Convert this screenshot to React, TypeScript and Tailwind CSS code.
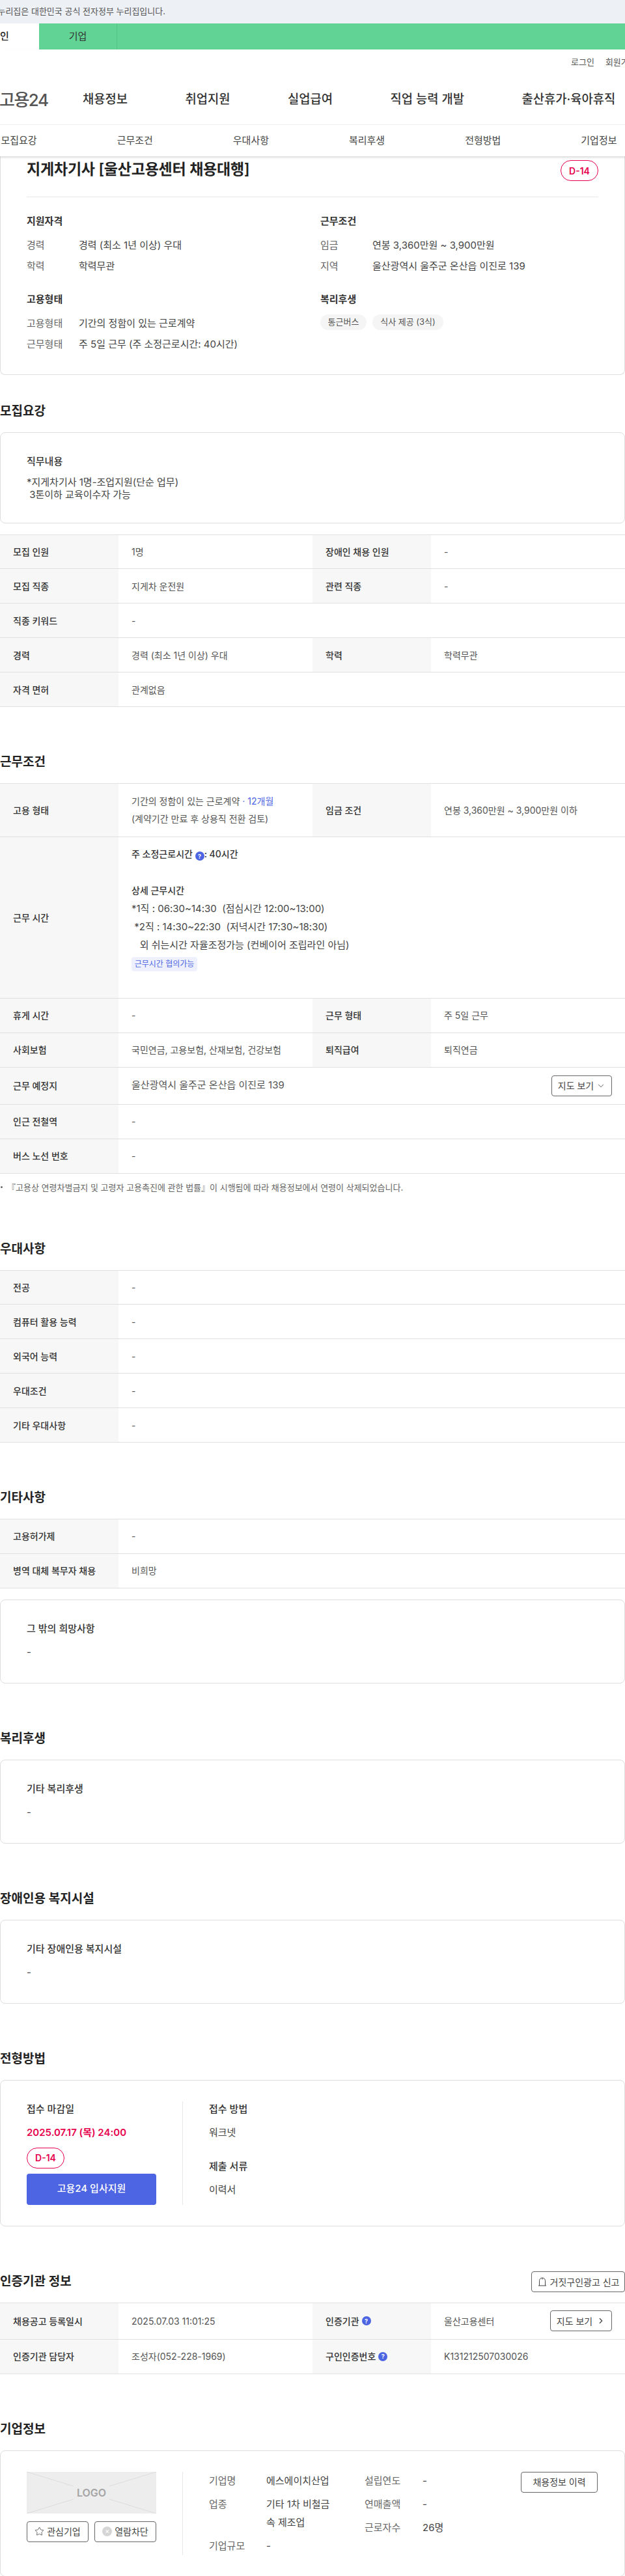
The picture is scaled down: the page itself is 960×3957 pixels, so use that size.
import { ChevronDown, ChevronRight, Star } from 'lucide-react'
import type { ReactNode } from 'react'

function Help() {
  return (
    <span className="inline-flex h-[14px] w-[14px] items-center justify-center rounded-full bg-[#4d65e3] align-[-2px] text-[9px] font-bold leading-none text-white">
      ?
    </span>
  )
}

function DBadge() {
  return (
    <span className="flex h-8 w-[58px] items-center justify-center rounded-full border border-[#e6004d] text-[14px] font-semibold text-[#e6004d]">
      D-14
    </span>
  )
}

function Section({ title, action, children }: { title: string; action?: ReactNode; children: ReactNode }) {
  return (
    <section className="mt-[71.5px]">
      <div className="mb-[17.5px] flex h-7 items-center justify-between">
        <h2 className="text-[19px] font-semibold leading-7 text-[#222]">{title}</h2>
        {action}
      </div>
      {children}
    </section>
  )
}

function Box({ title, children, className }: { title: string; children: ReactNode; className?: string }) {
  return (
    <div className={`rounded-lg border border-[#ddd] px-10 pt-[32px] ${className ?? 'pb-[35px]'}`}>
      <h3 className="text-[15px] font-medium leading-6 text-[#333]">{title}</h3>
      <div className="mt-3 text-[15px] leading-6 text-[#444]">{children}</div>
    </div>
  )
}

function Label({ children }: { children: ReactNode }) {
  return (
    <div className="flex items-center bg-[#f7f7f7] pl-5 text-[14px] font-medium text-[#333]">{children}</div>
  )
}

function Value({ children, wide }: { children: ReactNode; wide?: boolean }) {
  return (
    <div className={`flex items-center pl-5 text-[14px] text-[#555] ${wide ? 'col-span-3' : ''}`}>{children}</div>
  )
}

function Row({ children, h = 'h-[52.9px]' }: { children: ReactNode; h?: string }) {
  return <div className={`grid grid-cols-[182px_298px_182px_298px] border-b border-[#e0e0e0] ${h}`}>{children}</div>
}

function Pair({ a, b, c, d }: { a: string; b: string; c: string; d: string }) {
  return (
    <Row>
      <Label>{a}</Label>
      <Value>{b}</Value>
      <Label>{c}</Label>
      <Value>{d}</Value>
    </Row>
  )
}

function Single({ a, b }: { a: string; b: string }) {
  return (
    <Row>
      <Label>{a}</Label>
      <Value wide>{b}</Value>
    </Row>
  )
}

function Table({ children }: { children: ReactNode }) {
  return <div className="border-t border-[#e0e0e0]">{children}</div>
}

function Outline({ children, className }: { children: ReactNode; className: string }) {
  return (
    <button className={`flex h-8 items-center justify-center rounded border border-[#666] text-[14px] text-[#444] ${className}`}>
      {children}
    </button>
  )
}

function Info({ k, v, mt }: { k: string; v: string; mt: string }) {
  return (
    <div className={`flex text-[15px] leading-6 ${mt}`}>
      <span className="w-20 text-[#666]">{k}</span>
      <span className="text-[#444]">{v}</span>
    </div>
  )
}

function Bell() {
  return (
    <svg width="16" height="16" viewBox="0 0 16 16" fill="none" stroke="#444" strokeWidth="1">
      <path d="M3.5 14V6.5a4.5 4.5 0 0 1 9 0V14M2 14h12M8 2v2.5" />
    </svg>
  )
}

const tabs = ['모집요강', '근무조건', '우대사항', '복리후생', '전형방법', '기업정보']
const menu = ['채용정보', '취업지원', '실업급여', '직업 능력 개발', '출산휴가·육아휴직']

export default function App() {
  return (
    <div className="w-[960px] overflow-hidden bg-white font-[family-name:Inter,'Noto_Sans_CJK_KR',sans-serif] text-[#222]">
      <div className="h-9 bg-[#edf0f5]">
        <div className="flex h-9 w-[254px] items-center justify-end whitespace-nowrap text-[13px] text-[#555]">
          이 누리집은 대한민국 공식 전자정부 누리집입니다.
        </div>
      </div>
      <div className="flex h-10 bg-[#61d394] text-[15px]">
        <div className="-ml-[60px] flex w-[120px] items-center justify-center bg-white font-medium">개인</div>
        <div className="flex w-[120px] items-center justify-center border-r border-[#55c486] text-[#333]">기업</div>
      </div>

      <header className="relative z-10 bg-white shadow-[0_2px_3px_rgba(0,0,0,0.15)]">
        <div className="flex h-10 items-center gap-[17px] pl-[877px] text-[13px] whitespace-nowrap text-[#555]">
          <span>로그인</span>
          <span>회원가입</span>
        </div>
        <div className="flex h-[76px] items-center whitespace-nowrap border-b border-[#eee] text-[18.75px] font-medium text-[#333]">
          <div className="mr-[53.5px] flex w-[73.5px] shrink-0 justify-end text-[26px] font-medium tracking-[-1.5px] text-[#555]">고용24</div>
          <div className="flex gap-[88.5px]">
            {menu.map((m) => (
              <span key={m}>{m}</span>
            ))}
          </div>
        </div>
        <nav className="-ml-[60px] grid h-[48px] w-[1069px] grid-cols-6 items-center text-center text-[15px] text-[#444]">
          {tabs.map((t) => (
            <span key={t}>{t}</span>
          ))}
        </nav>
      </header>

      <div className="rounded-b-lg border-x border-b border-[#ddd] px-10 pt-1.5 pb-[34px]">
        <div className="flex items-start justify-between border-b border-[#e8e8e8] pb-6">
          <h1 className="text-[23px] font-semibold leading-7 tracking-[-0.2px] text-[#222]">지게차기사 [울산고용센터 채용대행]</h1>
          <DBadge />
        </div>
        <div className="grid grid-cols-[451px_1fr] pt-[25px]">
          <div>
            <h3 className="text-[15px] font-semibold leading-6 text-[#333]">지원자격</h3>
            <Info k="경력" v="경력 (최소 1년 이상) 우대" mt="mt-[13px]" />
            <Info k="학력" v="학력무관" mt="mt-[7.5px]" />
            <h3 className="mt-[27.5px] text-[15px] font-semibold leading-6 text-[#333]">고용형태</h3>
            <Info k="고용형태" v="기간의 정함이 있는 근로계약" mt="mt-[12.5px]" />
            <Info k="근무형태" v="주 5일 근무 (주 소정근로시간: 40시간)" mt="mt-[8.5px]" />
          </div>
          <div>
            <h3 className="text-[15px] font-semibold leading-6 text-[#333]">근무조건</h3>
            <Info k="임금" v="연봉 3,360만원 ~ 3,900만원" mt="mt-[13px]" />
            <Info k="지역" v="울산광역시 울주군 온산읍 이진로 139" mt="mt-[7.5px]" />
            <h3 className="mt-[27.5px] text-[15px] font-semibold leading-6 text-[#333]">복리후생</h3>
            <div className="mt-[11px] flex gap-[9px] text-[13px] text-[#555]">
              <span className="flex h-6 w-[71px] items-center justify-center rounded-full bg-[#f5f5f5]">통근버스</span>
              <span className="flex h-6 w-[109px] items-center justify-center rounded-full bg-[#f5f5f5]">식사 제공 (3식)</span>
            </div>
          </div>
        </div>
      </div>

      <section className="mt-[42px]">
        <h2 className="mb-[17.5px] text-[19px] font-semibold leading-7 text-[#222]">모집요강</h2>
        <div className="rounded-lg border border-[#ddd] px-10 pt-[32px] pb-[33px]">
          <h3 className="text-[15px] font-medium leading-6 text-[#333]">직무내용</h3>
          <p className="mt-2.5 whitespace-pre text-[15px] leading-[19.5px] text-[#444]">
            {'*지게차기사 1명-조업지원(단순 업무)\n 3톤이하 교육이수자 가능'}
          </p>
        </div>
        <div className="mt-[17px]">
          <Table>
            <Pair a="모집 인원" b="1명" c="장애인 채용 인원" d="-" />
            <Pair a="모집 직종" b="지게차 운전원" c="관련 직종" d="-" />
            <Single a="직종 키워드" b="-" />
            <Pair a="경력" b="경력 (최소 1년 이상) 우대" c="학력" d="학력무관" />
            <Single a="자격 면허" b="관계없음" />
          </Table>
        </div>
      </section>

      <Section title="근무조건">
        <Table>
          <Row h="h-[81.6px]">
            <Label>고용 형태</Label>
            <div className="flex flex-col justify-center pl-5 text-[14px] leading-[27.5px] text-[#555]">
              <span>
                기간의 정함이 있는 근로계약 <span className="text-[#4d65e3]">· 12개월</span>
              </span>
              <span>(계약기간 만료 후 상용직 전환 검토)</span>
            </div>
            <Label>임금 조건</Label>
            <Value>연봉 3,360만원 ~ 3,900만원 이하</Value>
          </Row>
          <Row h="h-[248.4px]">
            <Label>근무 시간</Label>
            <div className="col-span-3 pt-3 pl-5 text-[14px] leading-7 text-[#444]">
              <p className="font-medium text-[#333]">
                주 소정근로시간 <Help />: 40시간
              </p>
              <p className="mt-7 font-medium text-[#333]">상세 근무시간</p>
              <p className="whitespace-pre text-[15px]">*1직 : 06:30~14:30  (점심시간 12:00~13:00)</p>
              <p className="whitespace-pre text-[15px]"> *2직 : 14:30~22:30  (저녁시간 17:30~18:30)</p>
              <p className="whitespace-pre text-[15px]">   외 쉬는시간 자율조정가능 (컨베이어 조립라인 아님)</p>
              <span className="mt-1 flex h-[22px] w-[101px] items-center justify-center rounded bg-[#eef1fd] text-[12px] text-[#4d65e3]">
                근무시간 협의가능
              </span>
            </div>
          </Row>
          <Pair a="휴게 시간" b="-" c="근무 형태" d="주 5일 근무" />
          <Pair a="사회보험" b="국민연금, 고용보험, 산재보험, 건강보험" c="퇴직급여" d="퇴직연금" />
          <Row h="h-[57px]">
            <Label>근무 예정지</Label>
            <div className="col-span-3 flex items-center justify-between pr-5 pl-5 text-[15px] text-[#555]">
              울산광역시 울주군 온산읍 이진로 139
              <Outline className="w-[93px] gap-1">
                지도 보기 <ChevronDown size={14} strokeWidth={1.5} />
              </Outline>
            </div>
          </Row>
          <Single a="인근 전철역" b="-" />
          <Single a="버스 노선 번호" b="-" />
        </Table>
        <p className="mt-[11px] flex items-center gap-[7px] pl-[1px] text-[13px] leading-5 text-[#666]">
          <span className="h-[3px] w-[3px] rounded-full bg-[#666]" />
          『고용상 연령차별금지 및 고령자 고용촉진에 관한 법률』이 시행됨에 따라 채용정보에서 연령이 삭제되었습니다.
        </p>
      </Section>

      <Section title="우대사항">
        <Table>
          <Single a="전공" b="-" />
          <Single a="컴퓨터 활용 능력" b="-" />
          <Single a="외국어 능력" b="-" />
          <Single a="우대조건" b="-" />
          <Single a="기타 우대사항" b="-" />
        </Table>
      </Section>

      <Section title="기타사항">
        <Table>
          <Single a="고용허가제" b="-" />
          <Single a="병역 대체 복무자 채용" b="비희망" />
        </Table>
        <Box title="그 밖의 희망사항" className="mt-[17px] pb-[35px]">
          -
        </Box>
      </Section>

      <Section title="복리후생">
        <Box title="기타 복리후생">-</Box>
      </Section>

      <Section title="장애인용 복지시설">
        <Box title="기타 장애인용 복지시설">-</Box>
      </Section>

      <Section title="전형방법">
        <div className="flex rounded-lg border border-[#ddd] px-10 pt-8 pb-8">
          <div className="w-[199px]">
            <h3 className="text-[15px] font-medium leading-6 text-[#333]">접수 마감일</h3>
            <p className="mt-3 text-[15px] font-semibold leading-6 text-[#e6004d]">2025.07.17 (목) 24:00</p>
            <div className="mt-[11px]">
              <DBadge />
            </div>
            <button className="mt-2 h-12 w-full rounded bg-[#4d65e3] text-[15px] font-medium text-white">
              고용24 입사지원
            </button>
          </div>
          <div className="ml-10 border-l border-[#e8e8e8] pl-10">
            <h3 className="text-[15px] font-medium leading-6 text-[#333]">접수 방법</h3>
            <p className="mt-3 text-[15px] leading-6 text-[#444]">워크넷</p>
            <h3 className="mt-7 text-[15px] font-medium leading-6 text-[#333]">제출 서류</h3>
            <p className="mt-3 text-[15px] leading-6 text-[#444]">이력서</p>
          </div>
        </div>
      </Section>

      <Section
        title="인증기관 정보"
        action={
          <Outline className="w-[144px] gap-1">
            <Bell /> 거짓구인광고 신고
          </Outline>
        }
      >
        <Table>
          <Row h="h-[56px]">
            <Label>채용공고 등록일시</Label>
            <Value>2025.07.03 11:01:25</Value>
            <Label>
              <span className="flex items-center gap-1">
                인증기관 <Help />
              </span>
            </Label>
            <div className="flex items-center justify-between pr-5 pl-5 text-[14px] text-[#555]">
              울산고용센터
              <Outline className="w-[95px] gap-1.5">
                지도 보기 <ChevronRight size={14} strokeWidth={2} />
              </Outline>
            </div>
          </Row>
          <Row>
            <Label>인증기관 담당자</Label>
            <Value>조성자(052-228-1969)</Value>
            <Label>
              <span className="flex items-center gap-1">
                구인인증번호 <Help />
              </span>
            </Label>
            <Value>K131212507030026</Value>
          </Row>
        </Table>
      </Section>

      <Section title="기업정보">
        <div className="flex rounded-lg border border-[#ddd] px-10 pt-8 pb-8 text-[15px] leading-7">
          <div className="w-[199px] shrink-0">
            <div className="relative flex h-16 items-center justify-center bg-[#ededed]">
              <svg className="absolute inset-0" width="199" height="64" viewBox="0 0 199 64" stroke="#dcdcdc" strokeWidth="1">
                <path d="M0 0L72 22M199 0L127 22M0 64L72 42M199 64L127 42" />
              </svg>
              <span className="text-[16px] font-semibold text-[#a5a5a5]">LOGO</span>
            </div>
            <div className="mt-3 flex justify-between">
              <Outline className="w-[95px] gap-1">
                <Star size={15} strokeWidth={1.3} /> 관심기업
              </Outline>
              <Outline className="w-[95px] gap-1">
                <span className="flex h-[15px] w-[15px] items-center justify-center rounded-full bg-[#d5d5d5] text-[11px] leading-none text-white">×</span>
                열람차단
              </Outline>
            </div>
          </div>
          <div className="ml-10 flex h-[128px] flex-1 border-l border-[#e8e8e8] pl-10 text-[#444]">
            <div className="w-[239px] shrink-0">
              <div className="flex">
                <span className="w-[88px] text-[#666]">기업명</span>
                <span>에스에이치산업</span>
              </div>
              <div className="mt-2 flex">
                <span className="w-[88px] text-[#666]">업종</span>
                <span>
                  기타 1차 비철금
                  <br />속 제조업
                </span>
              </div>
              <div className="mt-2 flex">
                <span className="w-[88px] text-[#666]">기업규모</span>
                <span>-</span>
              </div>
            </div>
            <div className="w-[240px] shrink-0">
              <div className="flex">
                <span className="w-[89px] text-[#666]">설립연도</span>
                <span>-</span>
              </div>
              <div className="mt-2 flex">
                <span className="w-[89px] text-[#666]">연매출액</span>
                <span>-</span>
              </div>
              <div className="mt-2 flex">
                <span className="w-[89px] text-[#666]">근로자수</span>
                <span>26명</span>
              </div>
            </div>
            <Outline className="w-[118px] shrink-0">채용정보 이력</Outline>
          </div>
        </div>
      </Section>
    </div>
  )
}
